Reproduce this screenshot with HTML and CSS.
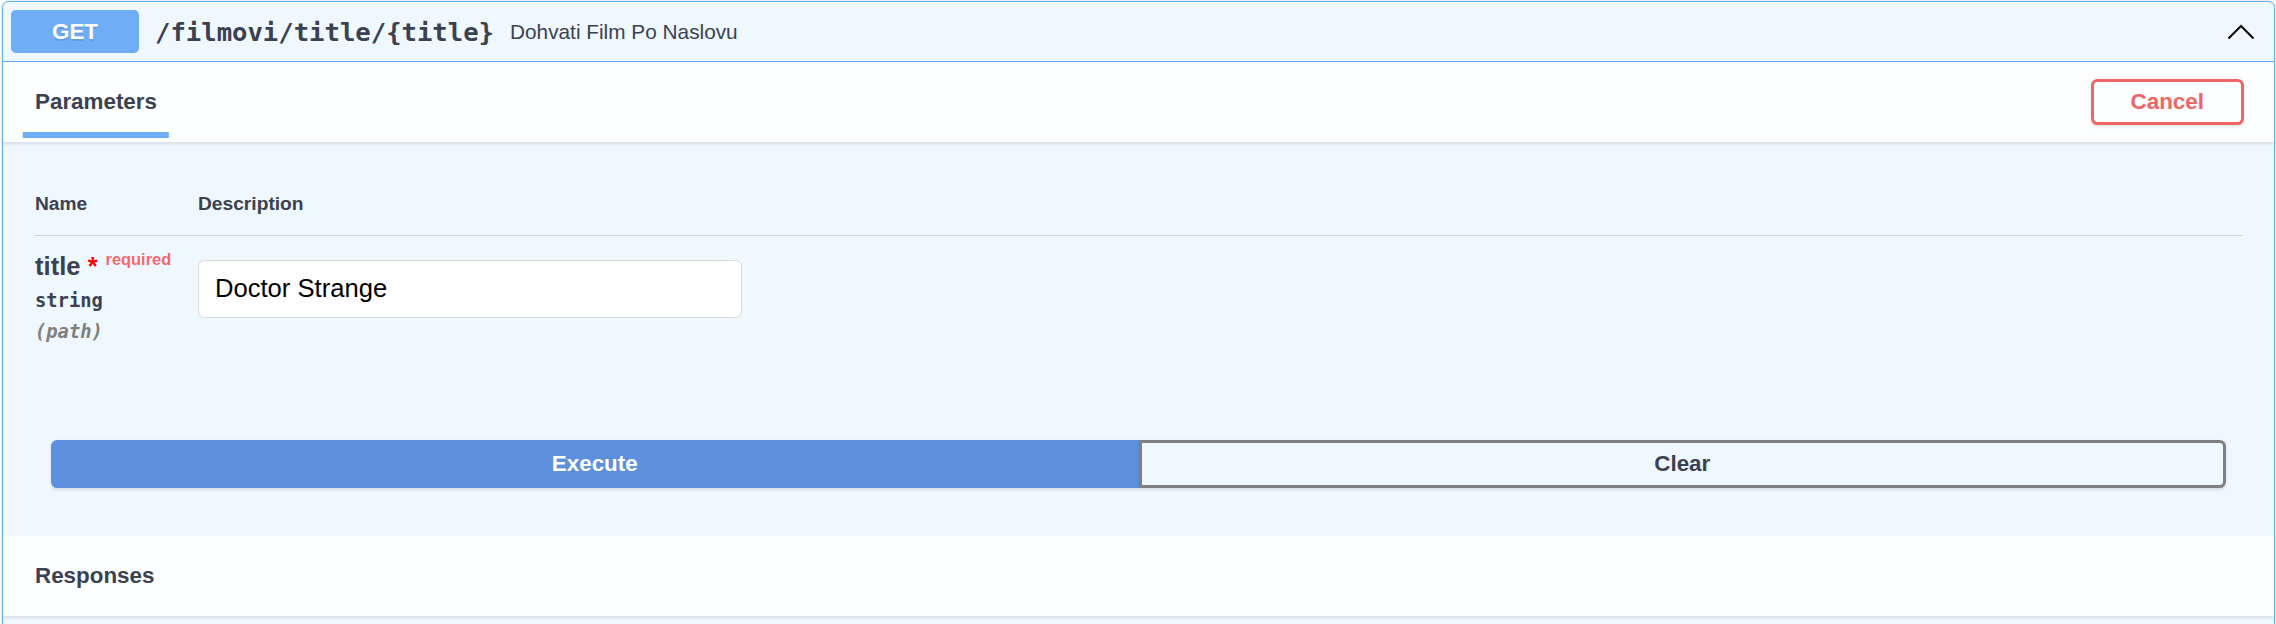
FILE: index.html
```html
<!DOCTYPE html>
<html>
<head>
<meta charset="utf-8">
<link rel="stylesheet" href="styles.css">
</head>
<body>
<div class="opblock">
  <div class="summary">
    <span class="method">GET</span>
    <span class="path">/filmovi/title/{title}</span>
    <span class="desc">Dohvati Film Po Naslovu</span>
    <svg class="arrow" width="28" height="16" viewBox="0 0 28 16"><polyline points="1.5,14.5 14,2 26.5,14.5" fill="none" stroke="#000" stroke-width="2"/></svg>
  </div>
  <div class="opbody">
    <div class="section-header">
      <div class="tab"><h4><span class="tab-label">Parameters</span></h4></div>
      <button class="btn cancel">Cancel</button>
    </div>
    <div class="table-container">
      <div class="params">
        <div class="th th-name">Name</div>
        <div class="th">Description</div>
        <div class="td td-name">
          <div class="pname">title<span class="star">&nbsp;*</span><span class="req">required</span></div>
          <div class="ptype">string</div>
          <div class="pin">(path)</div>
        </div>
        <div class="td td-desc">
          <input class="pinput" type="text" value="Doctor Strange">
        </div>
      </div>
    </div>
    <div class="btn-group">
      <button class="btn execute">Execute</button>
      <button class="btn clear">Clear</button>
    </div>
    <div class="section-header">
      <h4 class="resp">Responses</h4>
    </div>
  </div>
</div>
</body>
</html>
```
FILE: styles.css
```css
html, body {
  margin: 0;
  padding: 0;
  background: #fff;
}
body {
  font-family: "Liberation Sans", Arial, sans-serif;
  color: #3b4151;
  padding: 1px 1px 0 2px;
}
.opblock {
  border: 1.6px solid #61affe;
  border-radius: 6.4px;
  background: rgba(97, 175, 254, 0.1);
  box-shadow: 0 0 3px rgba(0, 0, 0, 0.19);
  height: 680px;
  overflow: hidden;
}
.summary {
  display: flex;
  align-items: center;
  padding: 8px;
  border-bottom: 1.6px solid #61affe;
}
.method {
  background: #6fadf7;
  color: #fff;
  border-radius: 4.8px;
  font-weight: 700;
  font-size: 22.4px;
  line-height: 24px;
  min-width: 128px;
  padding: 9.6px 0;
  text-align: center;
  text-shadow: 0 1.6px 0 rgba(0, 0, 0, 0.1);
}
.path {
  font-family: "DejaVu Sans Mono", "Liberation Mono", monospace;
  font-weight: 700;
  font-size: 25.6px;
  padding: 0 16px;
  color: #3b4151;
}
.desc {
  flex: 1 1 auto;
  font-size: 20.8px;
  color: #3b4151;
}
.arrow {
  margin-right: 11px;
  flex: none;
}
.section-header {
  display: flex;
  align-items: center;
  min-height: 80px;
  box-sizing: border-box;
  padding: 12.8px 30px 12.8px 32px;
  background: rgba(255, 255, 255, 0.8);
  box-shadow: 0 1.6px 3.2px rgba(0, 0, 0, 0.1);
}
.tab {
  flex: 1;
  display: flex;
}
.section-header h4 {
  margin: 0;
  font-size: 22.4px;
  font-weight: 700;
  color: #3b4151;
}
.tab-label {
  position: relative;
}
.tab-label::after {
  content: "";
  position: absolute;
  left: 50%;
  transform: translateX(-50%);
  bottom: -24px;
  width: 120%;
  height: 6.4px;
  background: #6fadf7;
}
.btn {
  font-family: "Liberation Sans", Arial, sans-serif;
  font-size: 22.4px;
  font-weight: 700;
  line-height: 24px;
  border-radius: 6.4px;
  border: 3px solid #808080;
  background: transparent;
  box-shadow: 0 1.6px 3.2px rgba(0, 0, 0, 0.1);
  color: #3b4151;
  cursor: pointer;
}
.cancel {
  border-color: #ef6464;
  color: #ef6464;
  padding: 8px 37px;
}
.table-container {
  padding: 32px 32px 33px;
}
.params {
  display: grid;
  grid-template-columns: 163px 1fr;
}
.th {
  font-size: 19.2px;
  font-weight: 700;
  line-height: 22px;
  padding: 19.2px 0;
  border-bottom: 1px solid rgba(59, 65, 81, 0.2);
  color: #3b4151;
}
.td {
  padding: 16px 0 16px;
}
.pname {
  font-size: 25.6px;
  font-weight: 700;
  line-height: 29px;
  white-space: nowrap;
}
.star {
  color: #f00;
}
.req {
  color: rgba(255, 0, 0, 0.6);
  font-size: 16.4px;
  padding: 8px;
  position: relative;
  top: -9.6px;
}
.ptype {
  font-family: "DejaVu Sans Mono", "Liberation Mono", monospace;
  font-weight: 700;
  font-size: 18.8px;
  line-height: 22px;
  padding: 6px 0 9px;
  color: #3b4151;
}
.pin {
  font-family: "DejaVu Sans Mono", "Liberation Mono", monospace;
  font-weight: 700;
  font-style: italic;
  font-size: 18.8px;
  line-height: 22px;
  color: #808080;
}
.pinput {
  display: block;
  box-sizing: border-box;
  width: 544px;
  height: 58px;
  margin: 8px 0;
  padding: 0 16px;
  font-family: "Liberation Sans", Arial, sans-serif;
  font-size: 25.6px;
  color: #000;
  background: #fff;
  border: 1px solid #d9d9d9;
  border-radius: 6.4px;
  outline: none;
}
.btn-group {
  display: flex;
  padding: 48px;
}
.btn-group .btn {
  flex: 1;
  padding: 9px 0;
}
.execute {
  background: #5c8fdc;
  border-color: #5c8fdc;
  color: #fff;
  border-radius: 6.4px 0 0 6.4px;
}
.clear {
  border-radius: 0 6.4px 6.4px 0;
}
.resp {
  flex: 1;
}
```
